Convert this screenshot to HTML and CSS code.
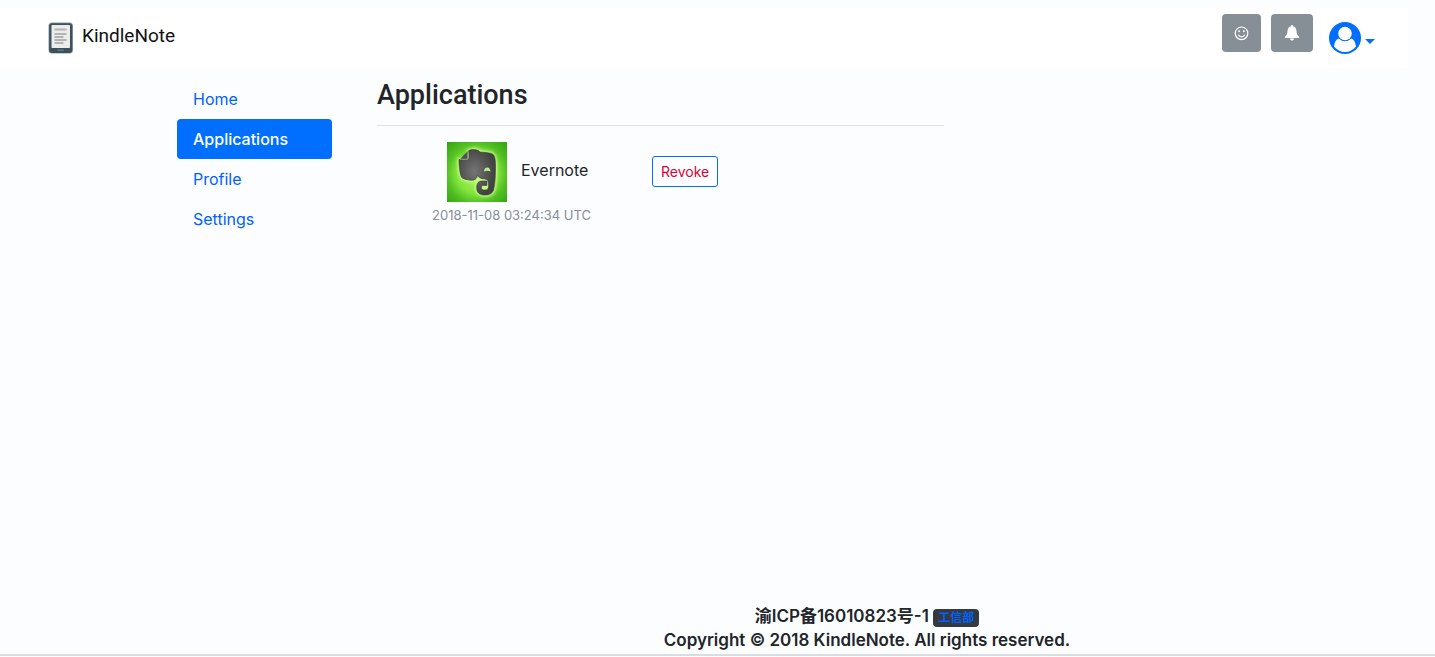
FILE: index.html
```html
<!DOCTYPE html>
<html lang="en">
<head>
<meta charset="utf-8">
<title>KindleNote - Applications</title>
<link rel="stylesheet" href="styles.css">
</head>
<body>
<header class="navbar">
  <a class="brand" href="#">
    <svg class="brand-icon" width="26" height="32" viewBox="0 0 26 32" aria-hidden="true">
      <rect x="0.5" y="0.5" width="24.500" height="31" rx="3.5" fill="#8b999f"/>
      <rect x="1.2" y="1.2" width="23" height="29.8" rx="3" fill="#3c515b"/>
      <rect x="3.5" y="3" width="18.500" height="23" rx="0.8" fill="#ececec"/>
      <path d="M6.500 7.500h12M6.500 12h12M6.500 15h9M6.500 18h12M6.500 21h9" stroke="#b3b3b3" stroke-width="1.800"/>
      <rect x="9.5" y="27.5" width="6.500" height="1.6" rx="0.8" fill="#5c7882"/>
    </svg>
    <span>KindleNote</span>
  </a>
  <div class="actions">
    <button class="icon-button" type="button" aria-label="Feedback">
      <svg width="15" height="16" viewBox="0 0 15 16" fill="none" stroke="#fff" aria-hidden="true">
        <circle cx="7.5" cy="8.3" r="6.3" stroke-width="1.2"/>
        <path d="M4.3 9.6c.6 1.5 1.8 2.2 3.2 2.2s2.6-.7 3.2-2.2" stroke-width="1.2"/>
        <circle cx="5.1" cy="6.3" r="1" fill="#fff" stroke="none"/>
        <circle cx="9.9" cy="6.3" r="1" fill="#fff" stroke="none"/>
      </svg>
    </button>
    <button class="icon-button icon-button-wide" type="button" aria-label="Notifications">
      <svg width="16" height="16" viewBox="0 0 16 16" fill="#fff" aria-hidden="true">
        <path d="M8 0c.7 0 1 .5 1 1.200C11.300 1.700 12.200 3.300 12.400 5.300c.3 3.700.9 5.400 2.700 6.500v1.200H.9v-1.200c1.800-1.100 2.400-2.800 2.700-6.500C3.800 3.300 4.700 1.700 7 1.200 7 .5 7.300 0 8 0zM5.900 13.500h4.200C9.800 14.900 9 15.600 8 15.600s-1.800-.7-2.100-2.100z"/>
      </svg>
    </button>
    <button class="account" type="button" aria-label="Account menu">
      <svg width="32" height="32" viewBox="0 0 32 32" aria-hidden="true">
        <circle cx="16" cy="16" r="16" fill="#006eff"/>
        <path d="M5 24.500C5.600 20 7.300 17 10.200 16.500c1.600 1.500 3.500 2.300 5.800 2.300s4.200-.8 5.800-2.300c2.900.5 4.600 3.500 5.200 8C24.300 28 20.400 30 16 30S7.700 28 5 24.500z" fill="#fff"/>
        <circle cx="16" cy="11.700" r="7.600" fill="#006eff"/>
        <circle cx="16" cy="11.500" r="6.800" fill="#fff"/>
      </svg>
      <span class="caret"></span>
    </button>
  </div>
</header>
<div class="layout">
  <nav class="side-nav" aria-label="Account">
    <a class="nav-link" href="#">Home</a>
    <a class="nav-link active" href="#" aria-current="page">Applications</a>
    <a class="nav-link" href="#">Profile</a>
    <a class="nav-link" href="#">Settings</a>
  </nav>
  <main class="content">
    <h1 class="title">Applications</h1>
    <div class="application">
      <div class="details">
        <div class="identity">
          <svg width="60" height="60" viewBox="0 0 60 60" role="img" aria-label="Evernote logo">
            <defs>
              <radialGradient id="green" cx="50%" cy="52%" r="68%">
                <stop offset="0" stop-color="#b4fa6b"/>
                <stop offset="0.5" stop-color="#82e43c"/>
                <stop offset="0.75" stop-color="#50bd22"/>
                <stop offset="1" stop-color="#38a713"/>
              </radialGradient>
              <radialGradient id="gray" cx="42%" cy="48%" r="55%">
                <stop offset="0" stop-color="#747474"/>
                <stop offset="1" stop-color="#424442"/>
              </radialGradient>
              <filter id="glow" x="-20%" y="-20%" width="140%" height="140%">
                <feGaussianBlur stdDeviation="1.5"/>
              </filter>
              <path id="elephant" d="M21.500 8.800C24 7 31 7 33 10c4 .3 8 .5 11.500 1.500C47.500 12.500 48.500 16 48.500 23c0 10-.3 19-2 25-1 3.500-4 5-8.500 5-5.500 0-8.300-2.200-8.300-7.500 0-4.500 2-6.500 5-6.500h5.300v4.500H36.500c-1.500 0-2 .6-2 2 0 2 1 2.500 3.300 2.500 3 0 3.700-1.300 3.700-4.500 0-4.500-.5-6-4-6.500-3.500-.3-5.500-1-7-3.500-.7 3.500-3 5.200-7 4.700-4-.5-7.500-1.200-9-3-1.500-3-2.500-11-2.500-17.700h6.500c2.500 0 3.500-1 3.500-3.500z"/>
            </defs>
            <rect width="60" height="60" fill="url(#green)"/>
            <use href="#elephant" fill="#cfff91" stroke="#cfff91" stroke-width="3" filter="url(#glow)"/>
            <use href="#elephant" fill="url(#gray)" stroke="#353b32" stroke-width="0.6"/>
            <path d="M13 17L20.800 9v8z" fill="#4d524a"/>
            <path d="M13 17.200h7.900V9" fill="none" stroke="#9aa68f" stroke-width="1"/>
            <path d="M37 29.500c.2-2.500 1.400-4 3.300-4 2.100 0 3 1.700 3.200 4-2-1-4.500-1-6.500 0z" fill="#b9ef91"/>
          </svg>
          <span class="name">Evernote</span>
        </div>
        <time class="date" datetime="2018-11-08T03:24:34Z">2018-11-08 03:24:34 UTC</time>
      </div>
      <button class="revoke" type="button">Revoke</button>
    </div>
  </main>
</div>
<footer class="footer">
  <div>渝ICP备16010823号-1 <a class="badge" href="#">工信部</a></div>
  <div>Copyright © 2018 KindleNote. All rights reserved.</div>
</footer>
</body>
</html>
```
FILE: styles.css
```css
* {
  box-sizing: border-box;
}

body {
  display: flex;
  flex-direction: column;
  min-height: 100vh;
  margin: 0;
  padding-top: 8px;
  background: #fcfdff;
  color: #212529;
  font: 16px/24px Inter, "Noto Sans CJK SC", sans-serif;
}

a {
  color: #0062ff;
  text-decoration: none;
}

button {
  font: inherit;
  cursor: pointer;
}

svg {
  display: block;
}

.navbar {
  display: flex;
  justify-content: space-between;
  align-items: flex-start;
  height: 60px;
  margin-right: 28px;
  padding: 6px 32px 0 48px;
  background: #fff;
}

.brand {
  display: flex;
  align-items: center;
  gap: 8px;
  padding-top: 7px;
  color: #111;
  font: 19px/30px Roboto, sans-serif;
}

.brand-icon {
  margin-bottom: -4px;
}

.actions {
  display: flex;
  align-items: flex-start;
  gap: 10px;
}

.icon-button {
  display: flex;
  align-items: center;
  justify-content: center;
  width: 39px;
  height: 38px;
  padding: 0;
  border: 0;
  border-radius: 4px;
  background: #868e96;
}

.icon-button-wide {
  width: 42px;
}

.account {
  display: flex;
  align-items: center;
  gap: 4px;
  padding: 8px 0 0 6px;
  border: 0;
  background: none;
}

.caret {
  margin-top: 7px;
  border: 5px solid transparent;
  border-top-color: #006eff;
  border-bottom: 0;
}

.layout {
  display: grid;
  grid-template-columns: 155px minmax(0, 567px);
  gap: 45px;
  flex: 1;
  padding: 11px 20px 0 177px;
}

.nav-link {
  display: block;
  padding: 8px 16px;
  border-radius: 4px;
}

.nav-link.active {
  background: #006eff;
  color: #fff;
  font-weight: 500;
}

.title {
  margin: 0 0 16px;
  padding-bottom: 14px;
  border-bottom: 1px solid #e1e3e5;
  font: 500 27px/32px Roboto, sans-serif;
}

.application {
  display: flex;
  align-items: flex-start;
  gap: 60px;
  padding-left: 55px;
}

.details {
  width: 160px;
}

.identity {
  display: flex;
  align-items: center;
  gap: 14px;
  padding-left: 15px;
}

.name {
  padding-bottom: 4px;
}

.date {
  display: block;
  color: #868e96;
  font-size: 13px;
  line-height: 26px;
  white-space: nowrap;
}

.revoke {
  height: 31px;
  margin-top: 14px;
  padding: 0 8px;
  border: 1px solid #006eff;
  border-radius: 3px;
  background: #fff;
  color: #dc0035;
  font-size: 14px;
}

.footer {
  padding: 0 0 2px 299px;
  margin-bottom: 1px;
  border-bottom: 2px solid #d9dce0;
  font-size: 17px;
  font-weight: 600;
  text-align: center;
}

.badge {
  display: inline-block;
  padding: 3px 5px;
  border-radius: 4px;
  background: #343a40;
  font-size: 12px;
  line-height: 12px;
}
```
